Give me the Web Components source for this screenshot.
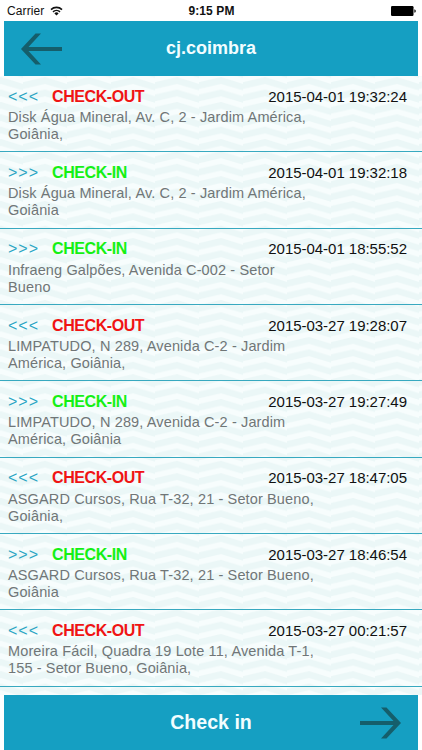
<!DOCTYPE html>
<html lang="pt">
<head>
<meta charset="utf-8">
<title>cj.coimbra</title>
<style>
  body {
    margin: 0;
    font-family: "Liberation Sans", Arial, sans-serif;
  }
</style>
</head>
<body>
<check-app></check-app>
<script>
const entries = [
  { type: 'out', date: '2015-04-01 19:32:24', address: ['Disk Água Mineral, Av. C, 2 - Jardim América,', 'Goiânia,'] },
  { type: 'in', date: '2015-04-01 19:32:18', address: ['Disk Água Mineral, Av. C, 2 - Jardim América,', 'Goiânia'] },
  { type: 'in', date: '2015-04-01 18:55:52', address: ['Infraeng Galpões, Avenida C-002 - Setor', 'Bueno'] },
  { type: 'out', date: '2015-03-27 19:28:07', address: ['LIMPATUDO, N 289, Avenida C-2 - Jardim', 'América, Goiânia,'] },
  { type: 'in', date: '2015-03-27 19:27:49', address: ['LIMPATUDO, N 289, Avenida C-2 - Jardim', 'América, Goiânia'] },
  { type: 'out', date: '2015-03-27 18:47:05', address: ['ASGARD Cursos, Rua T-32, 21 - Setor Bueno,', 'Goiânia,'] },
  { type: 'in', date: '2015-03-27 18:46:54', address: ['ASGARD Cursos, Rua T-32, 21 - Setor Bueno,', 'Goiânia'] },
  { type: 'out', date: '2015-03-27 00:21:57', address: ['Moreira Fácil, Quadra 19 Lote 11, Avenida T-1,', '155 - Setor Bueno, Goiânia,'] }
]

class StatusBar extends HTMLElement {
  constructor() {
    super();
    this.attachShadow({ mode: 'open' }).innerHTML = `
    <style>
      :host {
        display: grid;
        grid-template-columns: 1fr auto 1fr;
        align-items: center;
        box-sizing: border-box;
        height: 21px;
        padding: 0 6px 0 7px;
        background: #fff;
        color: #111;
        font-size: 12px;
        line-height: 18px;
      }
      .carrier { display: flex; align-items: center; gap: 6px; letter-spacing: 0.1px; }
      .time { font-weight: bold; letter-spacing: 0.1px; }
      .battery { justify-self: end; }
      svg { display: block; }
    </style>
    <div class="carrier">
      <span>Carrier</span>
      <svg width="13" height="10" viewBox="0 0 13 10" fill="none" stroke="#111" stroke-width="1.6">
        <path d="M1 3.6a8 8 0 0 1 11 0M3 5.9a5 5 0 0 1 7 0"/>
        <path d="M4.4 7.4a3 3 0 0 1 4.2 0L6.5 9.6z" fill="#111" stroke="none"/>
      </svg>
    </div>
    <span class="time">9:15 PM</span>
    <svg class="battery" width="25" height="10" viewBox="0 0 25 10">
      <rect width="22.5" height="10" rx="1.2" fill="#000"/>
      <path d="M23.4 3.2q1.4.4 1.4 1.8t-1.4 1.8z" fill="#000"/>
    </svg>
    `
  }
}

class NavBar extends HTMLElement {
  constructor() {
    super();
    this.attachShadow({ mode: 'open' }).innerHTML = `
    <style>
      :host {
        display: grid;
        grid-template-columns: 56px 1fr 56px;
        align-items: center;
        box-sizing: border-box;
        height: 55px;
        margin: 0 4px;
        background: #159fc2;
        color: #f2fdff;
        font-size: var(--title-size, 18px);
        font-weight: bold;
        text-align: center;
      }
    </style>
    <slot name="left"><span></span></slot>
    <slot></slot>
    <slot name="right"><span></span></slot>
    `
  }
}

class ArrowIcon extends HTMLElement {
  constructor() {
    super();
    this.attachShadow({ mode: 'open' }).innerHTML = `
    <style>
      :host { display: block; }
      :host([direction="right"]) svg { transform: scaleX(-1); }
      svg { display: block; }
    </style>
    <svg width="41" height="32" viewBox="0 0 41 32" fill="#155e6b">
      <path d="M0 16L14.5 0.5H20L7.5 14H41V18H7.5L20 31.5H14.5Z"/>
    </svg>
    `
  }
}

class CheckEntry extends HTMLElement {
  constructor() {
    super();
    this.shadowDOM = this.attachShadow({ mode: 'open' });
  }

  set entry(entry) {
    this._entry = entry;
    this.render();
  }

  get entry() {
    return this._entry || null;
  }

  render() {
    const { type, date, address } = this.entry
    this.shadowDOM.innerHTML = `
    <style>
      :host {
        display: block;
        box-sizing: border-box;
        height: 76.35px;
        padding: 10.6px 15px 0 8px;
        border-bottom: 1px solid #38a9c0;
      }
      .top { display: flex; align-items: baseline; height: 22.4px; line-height: 19px; }
      .marks { width: 44px; color: #2aa5c4; font-size: 16px; letter-spacing: 1px; }
      .label { font-size: 16px; font-weight: bold; letter-spacing: -0.42px; }
      .out { color: #f01414; }
      .in { color: #14f014; }
      .date { margin-left: auto; color: #111; font-size: 15px; letter-spacing: -0.03px; }
      .address { color: #707677; font-size: 14.5px; white-space: nowrap; letter-spacing: 0.13px; }
      .address div { height: 17px; line-height: 17px; }
    </style>
    <div class="top">
      <span class="marks">${type === 'out' ? '&lt;&lt;&lt;' : '&gt;&gt;&gt;'}</span>
      <span class="label ${type}">${type === 'out' ? 'CHECK-OUT' : 'CHECK-IN'}</span>
      <span class="date">${date}</span>
    </div>
    <div class="address">${address.map(line => `<div>${line}</div>`).join('')}</div>
    `
  }
}

class CheckApp extends HTMLElement {
  constructor() {
    super();
    this.shadowDOM = this.attachShadow({ mode: 'open' });
  }

  connectedCallback() {
    this.shadowDOM.innerHTML = `
    <style>
      :host {
        display: grid;
        grid-template: 21px 55px 619px 55px / 422px;
        height: 750px;
        overflow: hidden;
        background: #fff;
      }
      .list {
        display: grid;
        overflow: hidden;
      }
      .pattern, .rows { grid-area: 1 / 1; }
      .pattern { display: block; }
      .footer { --title-size: 19.6px; }
    </style>
    <status-bar></status-bar>
    <nav-bar><arrow-icon slot="left" style="margin-left:17px"></arrow-icon>cj.coimbra</nav-bar>
    <div class="list">
      <svg class="pattern" width="422" height="619">
        <defs>
          <pattern id="herringbone" width="44" height="12.375" patternUnits="userSpaceOnUse" x="1" y="7.9">
            <rect width="44" height="12.375" fill="#ebf7f7"/>
            <g fill="#f7fdfd">
              <path id="stripe" d="M0 0L22 6.5V12.3L0 5.8ZM22 5L44 0V5.8L22 10.8Z"/>
              <use href="#stripe" y="-12.375"/>
            </g>
          </pattern>
        </defs>
        <rect width="422" height="619" fill="url(#herringbone)"/>
      </svg>
      <div class="rows"></div>
    </div>
    <nav-bar class="footer">Check in<arrow-icon slot="right" direction="right" style="margin-left:-2px"></arrow-icon></nav-bar>
    `
    const rows = this.shadowDOM.querySelector('.rows')
    entries.forEach(entry => {
      const row = document.createElement('check-entry')
      row.entry = entry
      rows.appendChild(row)
    })
  }
}

customElements.define('status-bar', StatusBar)
customElements.define('nav-bar', NavBar)
customElements.define('arrow-icon', ArrowIcon)
customElements.define('check-entry', CheckEntry)
customElements.define('check-app', CheckApp)
</script>
</body>
</html>
